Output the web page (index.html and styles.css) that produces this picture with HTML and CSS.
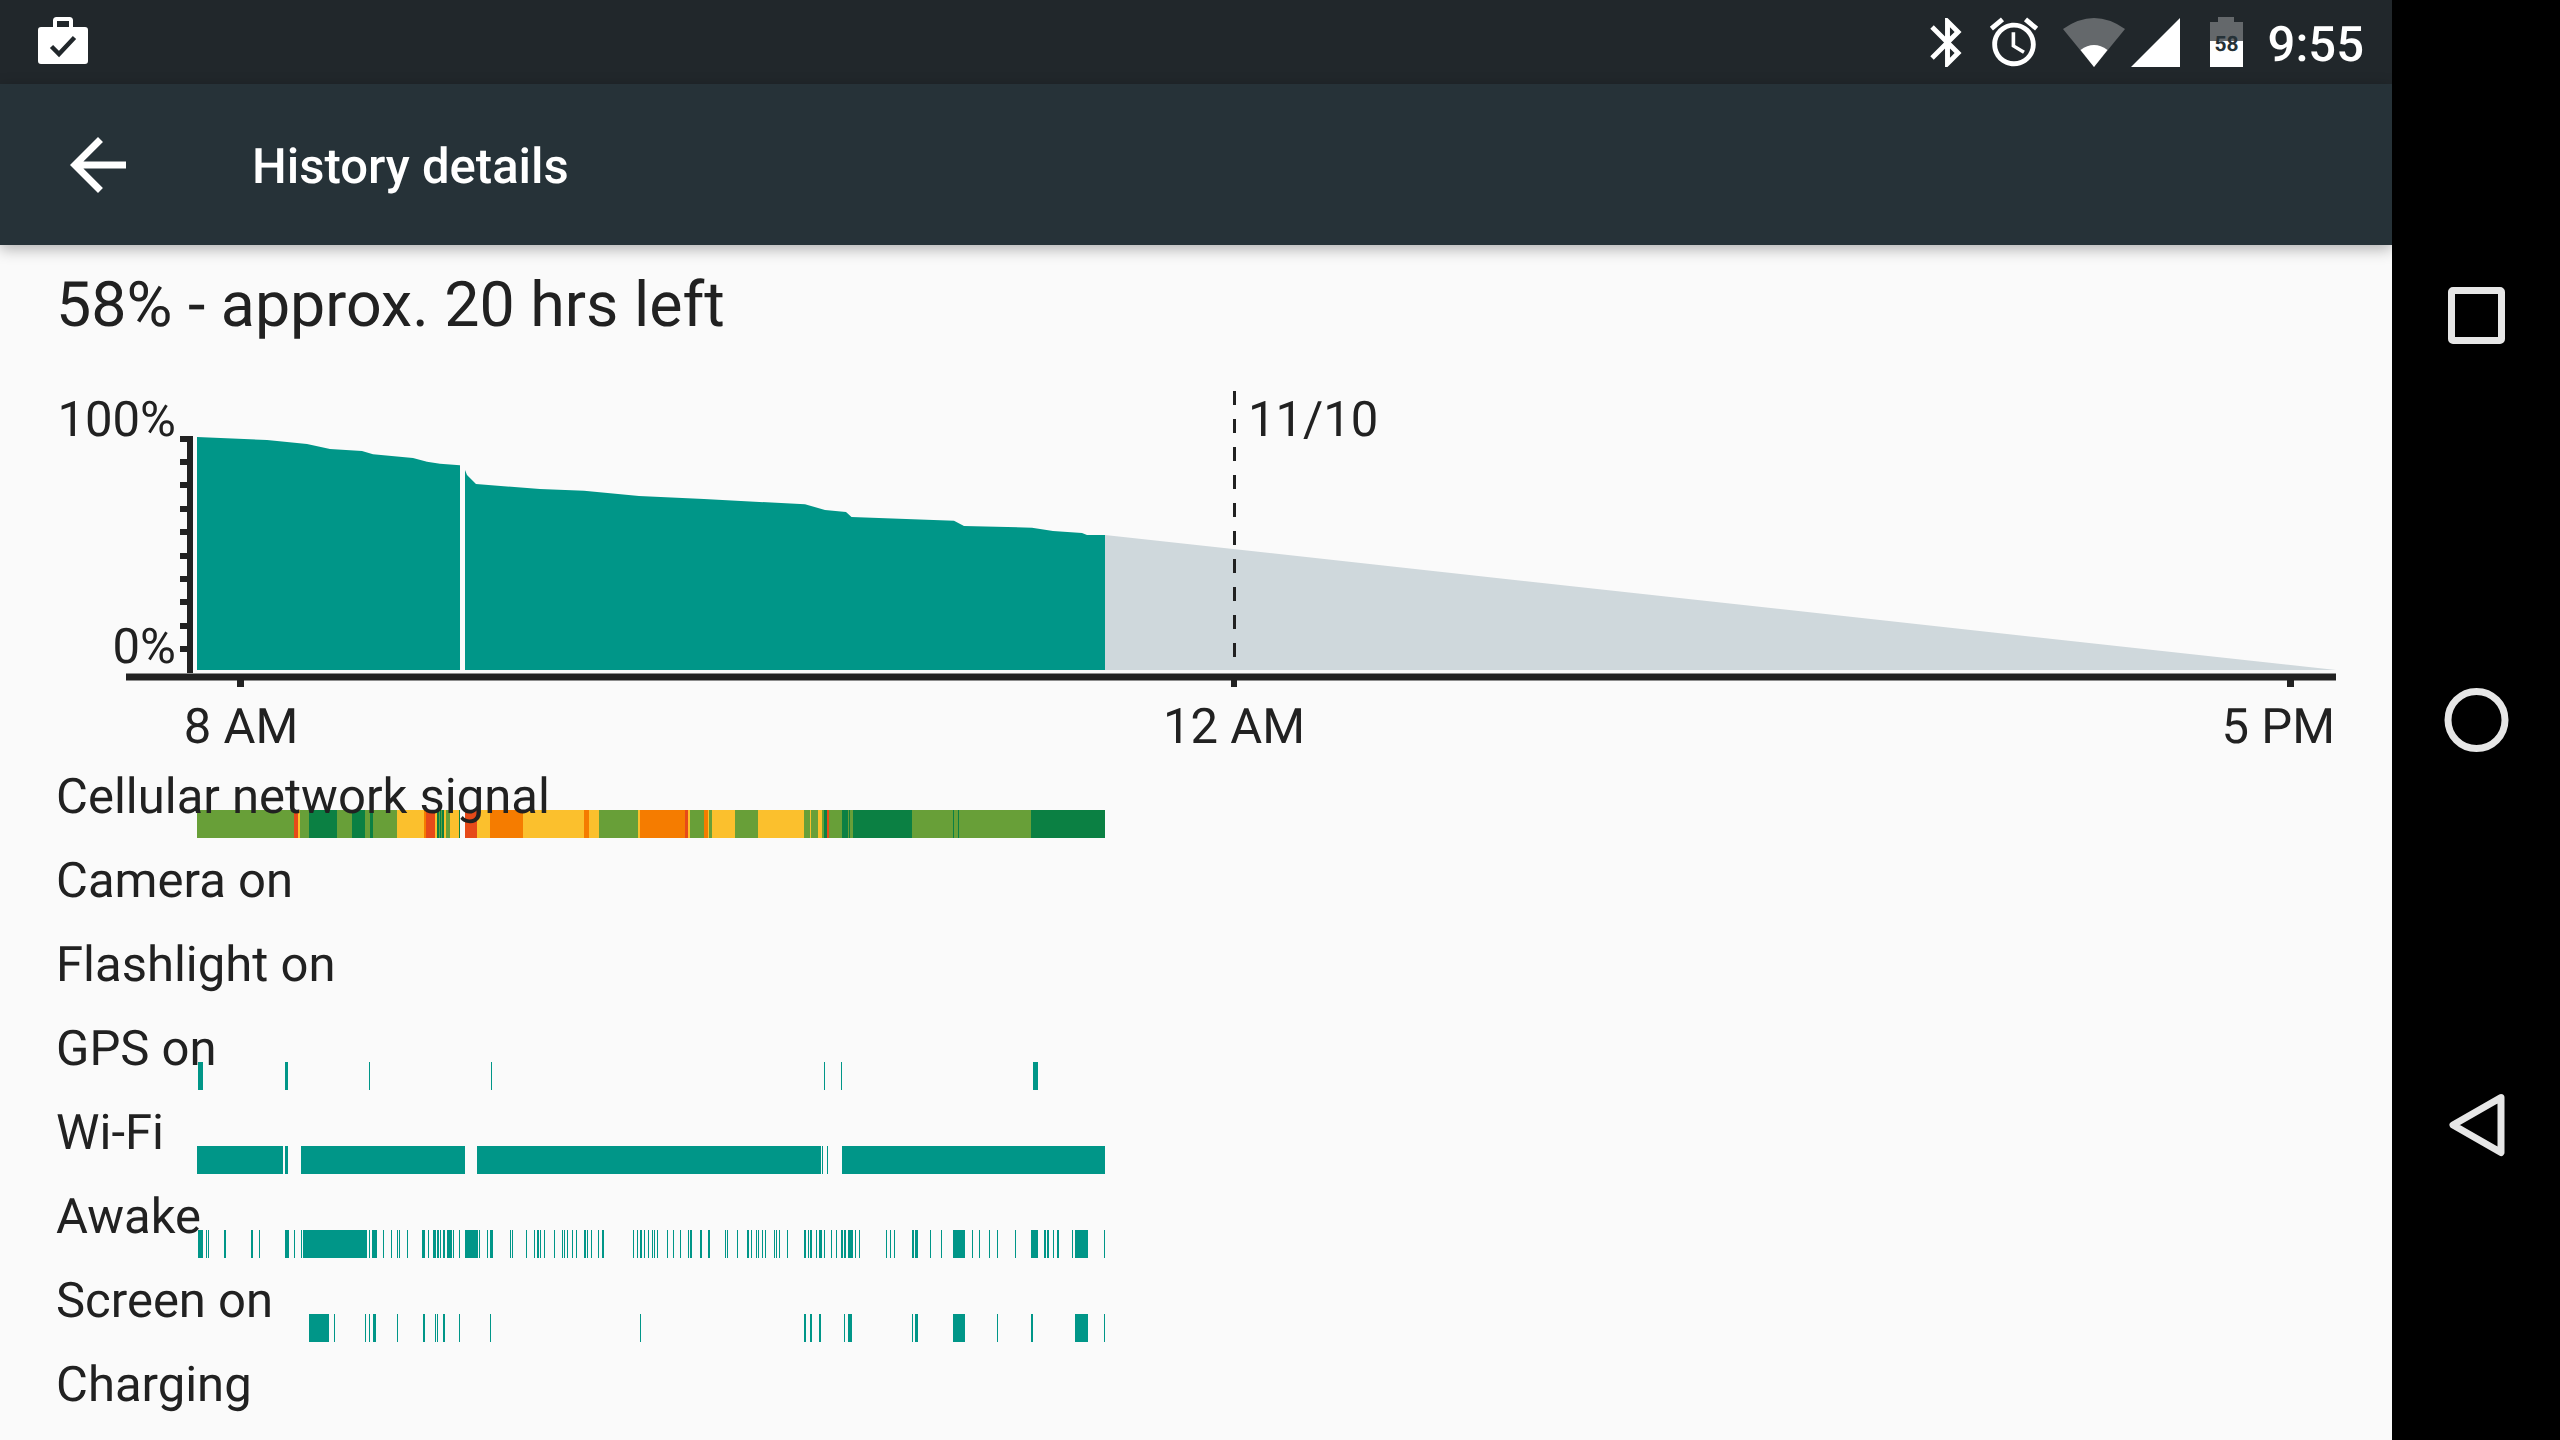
FILE: index.html
```html
<!DOCTYPE html>
<html>
<head>
  <title>History details</title>
  <link rel="stylesheet" href="styles.css">
</head>
<body>
  <div class="device">
    <div class="screen">

      <div class="status-bar">
        <svg class="bag-icon" viewBox="0 0 50 47">
          <path class="bag-body" d="M3 10h12V3.500A3.500 3.500 0 0 1 18.500 0h13A3.500 3.500 0 0 1 35 3.500V10h12a3 3 0 0 1 3 3v31a3 3 0 0 1-3 3H3a3 3 0 0 1-3-3V13a3 3 0 0 1 3-3zM19 4v6h12V4z"/>
          <path class="bag-check" d="M13.500 29.500l7.500 7.500 15.500-16.500"/>
        </svg>
        <div class="status-icons">
          <svg class="icon-bluetooth" viewBox="0 0 24 24"><path d="M17.710 7.710L12 2h-1v7.590L6.410 5 5 6.410 10.590 12 5 17.590 6.410 19 11 14.410V22h1l5.710-5.710-4.300-4.290 4.300-4.290zM13 5.830l1.880 1.880L13 9.590V5.830zm1.880 10.460L13 18.170v-3.760l1.880 1.880z"/></svg>
          <svg class="icon-alarm" viewBox="0 0 24 24"><path d="M22 5.720l-4.600-3.860-1.290 1.530 4.600 3.860L22 5.720zM7.880 3.390L6.600 1.860 2 5.710l1.290 1.530 4.590-3.850zM12.500 8H11v6l4.750 2.850.75-1.230-4-2.370V8zM12 4c-4.970 0-9 4.030-9 9s4.030 9 9 9 9-4.030 9-9-4.030-9-9-9zm0 16c-3.870 0-7-3.130-7-7s3.130-7 7-7 7 3.130 7 7-3.130 7-7 7z"/></svg>
          <svg class="icon-wifi" viewBox="0 0 62 49">
            <path class="dim" d="M0 11Q31-11 62 11L31 49z"/>
            <path d="M17.500 32Q31 22 44.500 32L31 49z"/>
          </svg>
          <svg class="icon-signal" viewBox="0 0 49 49"><path d="M49 0v49H0z"/></svg>
          <svg class="icon-battery" viewBox="0 0 33 51">
            <path class="dim" d="M8 0h16v5h9v19H0V5h8z"/>
            <path d="M0 24h33v26H0z"/>
            <text class="battery-level" x="16.500" y="34">58</text>
          </svg>
          <span class="clock">9:55</span>
        </div>
      </div>

      <div class="app-bar">
        <svg class="back-arrow" viewBox="0 0 24 24"><path d="M20 11H7.830l5.590-5.590L12 4l-8 8 8 8 1.410-1.410L7.830 13H20v-2z"/></svg>
        <span class="app-title">History details</span>
      </div>

      <div class="content">
        <h1 class="headline">58% - approx. 20 hrs left</h1>

        <svg class="chart" viewBox="0 370 2392 398">
          <path class="area" d="M197 437L267 440 307 444 330 449 362 451 373 454.300 413 458 427 461.700 440 463.700 460 465.300V670H197z"/>
          <path class="area" d="M465 470L467 475 476 484 540 489 584 490.700 639 496 704 499 805 504.300 825 510 846 512 851.500 517 954 520.700 964 526 1032 527.700 1053 531 1082 533 1087 535H1105V670H465z"/>
          <path class="projection" d="M1105 535L2336 670H1105z"/>

          <path class="axis" d="M187 436h6v237h-6z"/>
          <path class="axis" d="M180 436h7v6h-7zM180 459h7v6h-7zM180 482h7v6h-7zM180 506h7v6h-7zM180 529h7v6h-7zM180 553h7v6h-7zM180 576h7v6h-7zM180 599h7v6h-7zM180 623h7v6h-7zM180 646h7v6h-7z"/>
          <path class="axis" d="M126 673.500h2210v7H126z"/>
          <path class="axis" d="M237 680h7v7h-7zM1231 680h6v7h-6zM2287 680h7v7h-7z"/>
          <path class="date-line" d="M1234.500 391V670"/>

          <text class="chart-text end" x="176" y="436">100%</text>
          <text class="chart-text end" x="176" y="663">0%</text>
          <text class="chart-text" x="1248" y="436">11/10</text>
          <text class="chart-text middle" x="241" y="743">8 AM</text>
          <text class="chart-text middle" x="1234" y="743">12 AM</text>
          <text class="chart-text end" x="2335" y="743">5 PM</text>
        </svg>

        <div class="history-rows">
          <div class="history-row">
            <span class="row-label">Cellular network signal</span>
            <svg class="track" viewBox="197 0 908 28">
              <g class="light"><rect x="197" width="97"/><rect x="300" width="9"/><rect x="337" width="15"/><rect x="365" width="5"/><rect x="373" width="24"/><rect x="439" width="1"/><rect x="441" width="1"/><rect x="446" width="4"/><rect x="599" width="39"/><rect x="690" width="14"/><rect x="709" width="3"/><rect x="735" width="23"/><rect x="804" width="6"/><rect x="811" width="7"/><rect x="822" width="2"/><rect x="829" width="13"/><rect x="848" width="1"/><rect x="850" width="3"/><rect x="912" width="41"/><rect x="954" width="4"/><rect x="959" width="72"/></g>
              <g class="dark"><rect x="309" width="28"/><rect x="352" width="13"/><rect x="370" width="3"/><rect x="437" width="2"/><rect x="440" width="1"/><rect x="442" width="2"/><rect x="459" width="1"/><rect x="824" width="3"/><rect x="842" width="6"/><rect x="849" width="1"/><rect x="853" width="59"/><rect x="953" width="1"/><rect x="958" width="1"/><rect x="1031" width="74"/></g>
              <g class="yellow"><rect x="298" width="2"/><rect x="397" width="27"/><rect x="435" width="2"/><rect x="444" width="2"/><rect x="450" width="9"/><rect x="477" width="13"/><rect x="523" width="61"/><rect x="589" width="10"/><rect x="638" width="2"/><rect x="688" width="2"/><rect x="708" width="1"/><rect x="712" width="23"/><rect x="758" width="46"/><rect x="810" width="1"/><rect x="818" width="4"/></g>
              <g class="orange"><rect x="424" width="2"/><rect x="490" width="33"/><rect x="584" width="5"/><rect x="640" width="45"/><rect x="704" width="4"/></g>
              <g class="red"><rect x="294" width="4"/><rect x="426" width="9"/><rect x="465" width="12"/><rect x="685" width="3"/><rect x="827" width="2"/></g>
            </svg>
          </div>
          <div class="history-row"><span class="row-label">Camera on</span></div>
          <div class="history-row"><span class="row-label">Flashlight on</span></div>
          <div class="history-row">
            <span class="row-label">GPS on</span>
            <svg class="track" viewBox="197 0 908 28">
              <rect x="198" width="5"/><rect x="285" width="3"/><rect x="369" width="1"/><rect x="491" width="1"/><rect x="824" width="1"/><rect x="841" width="1"/><rect x="1033" width="5"/>
            </svg>
          </div>
          <div class="history-row">
            <span class="row-label">Wi-Fi</span>
            <svg class="track" viewBox="197 0 908 28">
              <rect x="197" width="86"/><rect x="285" width="3"/><rect x="301" width="164"/><rect x="477" width="344"/><rect x="822" width="1"/><rect x="827" width="1"/><rect x="842" width="263"/>
            </svg>
          </div>
          <div class="history-row">
            <span class="row-label">Awake</span>
            <svg class="track" viewBox="197 0 908 28">
              <rect x="198" width="5"/><rect x="206" width="1"/><rect x="208" width="1"/><rect x="224" width="2"/><rect x="251" width="2"/><rect x="259" width="1"/><rect x="285" width="4"/><rect x="294" width="1"/><rect x="301" width="1"/><rect x="303" width="64"/><rect x="369" width="1"/><rect x="372" width="5"/><rect x="383" width="1"/><rect x="391" width="1"/><rect x="397" width="1"/><rect x="399" width="1"/><rect x="407" width="1"/>
              <rect x="422" width="3"/><rect x="428" width="1"/><rect x="433" width="3"/><rect x="437" width="2"/><rect x="440" width="1"/><rect x="443" width="2"/><rect x="447" width="5"/><rect x="453" width="1"/><rect x="459" width="1"/><rect x="465" width="13"/><rect x="479" width="1"/><rect x="487" width="1"/><rect x="490" width="3"/>
              <rect x="510" width="1"/><rect x="512" width="1"/><rect x="526" width="1"/><rect x="534" width="1"/><rect x="537" width="2"/><rect x="540" width="1"/><rect x="544" width="1"/><rect x="554" width="1"/><rect x="562" width="1"/><rect x="564" width="1"/><rect x="567" width="1"/><rect x="572" width="1"/><rect x="576" width="1"/><rect x="584" width="2"/><rect x="587" width="1"/><rect x="591" width="1"/><rect x="598" width="1"/><rect x="602" width="2"/>
              <rect x="633" width="1"/><rect x="637" width="1"/><rect x="640" width="2"/><rect x="644" width="1"/><rect x="648" width="1"/><rect x="652" width="1"/><rect x="654" width="1"/><rect x="657" width="1"/><rect x="667" width="1"/><rect x="673" width="1"/><rect x="680" width="1"/><rect x="688" width="1"/><rect x="690" width="2"/>
              <rect x="700" width="2"/><rect x="708" width="2"/><rect x="725" width="1"/><rect x="727" width="1"/><rect x="737" width="1"/><rect x="747" width="2"/><rect x="751" width="1"/><rect x="756" width="1"/><rect x="758" width="1"/><rect x="762" width="1"/><rect x="765" width="1"/><rect x="774" width="1"/><rect x="776" width="1"/><rect x="779" width="1"/><rect x="787" width="1"/>
              <rect x="804" width="2"/><rect x="808" width="1"/><rect x="810" width="2"/><rect x="816" width="1"/><rect x="819" width="3"/><rect x="824" width="1"/><rect x="831" width="1"/><rect x="836" width="1"/><rect x="841" width="2"/><rect x="844" width="2"/><rect x="848" width="5"/><rect x="855" width="1"/><rect x="859" width="1"/>
              <rect x="886" width="1"/><rect x="890" width="1"/><rect x="894" width="1"/><rect x="912" width="2"/><rect x="915" width="3"/><rect x="930" width="1"/><rect x="941" width="1"/><rect x="953" width="12"/><rect x="972" width="1"/><rect x="979" width="1"/><rect x="989" width="1"/><rect x="997" width="1"/>
              <rect x="1015" width="1"/><rect x="1031" width="7"/><rect x="1044" width="2"/><rect x="1047" width="2"/><rect x="1053" width="1"/><rect x="1057" width="2"/><rect x="1072" width="1"/><rect x="1075" width="13"/><rect x="1104" width="1"/>
            </svg>
          </div>
          <div class="history-row">
            <span class="row-label">Screen on</span>
            <svg class="track" viewBox="197 0 908 28">
              <rect x="309" width="20"/><rect x="334" width="1"/><rect x="365" width="1"/><rect x="369" width="1"/><rect x="373" width="3"/><rect x="397" width="1"/><rect x="423" width="2"/><rect x="435" width="1"/><rect x="437" width="1"/><rect x="443" width="2"/><rect x="459" width="1"/><rect x="490" width="1"/><rect x="640" width="1"/>
              <rect x="804" width="2"/><rect x="810" width="2"/><rect x="819" width="2"/><rect x="844" width="1"/><rect x="848" width="4"/><rect x="912" width="1"/><rect x="915" width="3"/><rect x="953" width="12"/><rect x="997" width="1"/><rect x="1031" width="2"/><rect x="1075" width="13"/><rect x="1104" width="1"/>
            </svg>
          </div>
          <div class="history-row"><span class="row-label">Charging</span></div>
        </div>
      </div>
    </div>

    <div class="nav-bar">
      <svg class="nav-icon" viewBox="0 0 84 84"><rect x="17.500" y="17.500" width="50" height="50" rx="1.500"/></svg>
      <svg class="nav-icon" viewBox="0 0 84 84"><circle cx="42.500" cy="42" r="28.500"/></svg>
      <svg class="nav-icon" viewBox="0 0 84 84"><path d="M67 14.500L19 42l48 27.500z"/></svg>
    </div>
  </div>
</body>
</html>
```

FILE: styles.css
```css
* {
  margin: 0;
  padding: 0;
  box-sizing: border-box;
}

html, body {
  height: 100%;
}

body {
  font-family: 'Roboto', sans-serif;
  color: #212121;
  background: #000;
  text-rendering: geometricPrecision;
}

.device {
  display: flex;
  width: 100%;
  height: 100vh;
  overflow: hidden;
}

.screen {
  flex: 1;
  display: flex;
  flex-direction: column;
  background: #fafafa;
}

/* status bar */
.status-bar {
  flex: 0 0 84px;
  height: 84px;
  display: flex;
  align-items: center;
  justify-content: space-between;
  padding: 0 28px 0 38px;
  background: #21272b;
}

.bag-icon {
  width: 50px;
  height: 47px;
  margin-top: -3px;
}

.bag-body {
  fill: #fff;
  fill-rule: evenodd;
}

.bag-check {
  fill: none;
  stroke: #21272b;
  stroke-width: 4.500px;
}

.status-icons {
  display: flex;
  align-items: center;
  padding-top: 2px;
}

.status-icons svg {
  fill: #fff;
  flex: none;
}

.status-icons .dim {
  fill: #fff;
  fill-opacity: 0.3;
}

.icon-bluetooth {
  width: 59px;
  height: 59px;
  margin-top: -2px;
}

.icon-alarm {
  width: 58px;
  height: 58px;
  margin-left: 8px;
  margin-top: -3px;
}

.icon-wifi {
  width: 62px;
  height: 49px;
  margin-left: 20px;
  margin-top: -1px;
}

.icon-signal {
  width: 49px;
  height: 49px;
  margin-left: 6px;
  margin-top: -1px;
}

.icon-battery {
  width: 33px;
  height: 51px;
  margin-left: 30px;
  margin-top: -1px;
}

.battery-level {
  font-size: 21px;
  font-weight: 700;
  fill: #263238;
  text-anchor: middle;
}

.clock {
  margin-left: 25px;
  margin-top: 2px;
  font-size: 49px;
  font-weight: 500;
  color: #fff;
  line-height: 49px;
}

/* app bar */
.app-bar {
  position: relative;
  z-index: 2;
  flex: 0 0 161px;
  display: flex;
  align-items: center;
  padding-left: 56px;
  background: #263238;
  box-shadow: 0 4px 14px rgba(0, 0, 0, 0.3);
}

.back-arrow {
  width: 84px;
  height: 84px;
  fill: #fff;
}

.app-title {
  margin-left: 112px;
  margin-top: 3px;
  font-size: 49px;
  font-weight: 500;
  color: #fff;
}

/* content */
.content {
  flex: 1;
}

.headline {
  height: 125px;
  padding: 19px 0 0 56px;
  font-size: 62.700px;
  font-weight: 400;
  line-height: 84px;
}

.chart {
  display: block;
  width: 2392px;
  height: 398px;
}

.area {
  fill: #009688;
}

.projection {
  fill: #cfd8dc;
}

.axis {
  fill: #212121;
}

.date-line {
  stroke: #212121;
  stroke-width: 3px;
  stroke-dasharray: 14 14;
}

.chart-text {
  font-size: 49px;
  fill: #212121;
}

.chart-text.end {
  text-anchor: end;
}

.chart-text.middle {
  text-anchor: middle;
}

.history-row {
  position: relative;
  height: 84px;
}

.row-label {
  position: relative;
  z-index: 1;
  display: block;
  padding-left: 56px;
  font-size: 49px;
  line-height: 57px;
}

.track {
  position: absolute;
  left: 197px;
  top: 42px;
  width: 908px;
  height: 28px;
  fill: #009688;
  shape-rendering: crispEdges;
}

.track rect {
  height: 28px;
}

.light { fill: #689f38; }
.dark { fill: #0b8043; }
.yellow { fill: #fbc02d; }
.orange { fill: #f57c00; }
.red { fill: #e64a19; }

/* nav bar */
.nav-bar {
  flex: 0 0 168px;
  display: flex;
  flex-direction: column;
  align-items: center;
  justify-content: center;
  gap: 321px;
  background: #000;
}

.nav-icon {
  width: 84px;
  height: 84px;
  fill: none;
  stroke: #e6e6e6;
  stroke-width: 7px;
  stroke-linejoin: round;
}
```
